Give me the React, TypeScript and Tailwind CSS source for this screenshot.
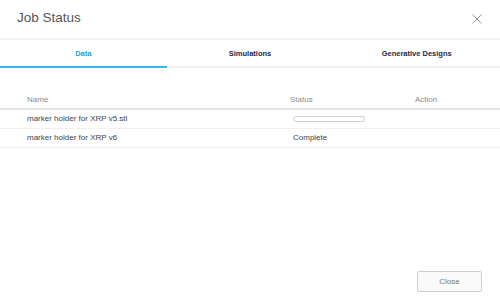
import { useState } from 'react';

export default function App() {
    const [activeTab, setActiveTab] = useState(0);

    const tabs = ["Data", "Simulations", "Generative Designs"];

    const rows = [
        { name: "marker holder for XRP v5.stl", status: null },
        { name: "marker holder for XRP v6", status: "Complete" }
    ];

    return (
        <div className="w-[500px] h-[300px] bg-white flex flex-col font-['Liberation_Sans',Arial,sans-serif] overflow-hidden">
            <div className="h-[38px] flex items-center justify-between pl-[17px] pr-[18px]">
                <h1 className="text-[13.5px] text-[#555] leading-none pb-[2px]">Job Status</h1>
                <button className="w-[10px] h-[10px] text-[#999]">
                    <svg viewBox="0 0 10 10" width="10" height="10" fill="none" stroke="currentColor" strokeWidth="1">
                        <path d="M0.5 0.5L9.5 9.5M9.5 0.5L0.5 9.5" />
                    </svg>
                </button>
            </div>

            <div className="h-[2px] bg-[#f2f2f2]" />

            <div className="flex h-[28px]">
                {tabs.map((tab, index) => (
                    <div
                        key={tab}
                        onClick={() => setActiveTab(index)}
                        className={`flex-1 flex items-center justify-center cursor-pointer border-b-2 text-[7.5px] font-bold pt-[1px] ${activeTab === index
                            ? "border-[#38b5ec] text-[#1e9fd8]"
                            : "border-[#f0f0f0] text-[#1d2947]"
                            }`}
                    >
                        {tab}
                    </div>
                ))}
            </div>

            <div className="mt-[23px]">
                <div className="flex items-center h-[19px] border-b-2 border-[#e6e6e6] text-[8px] text-[#8a8a8a]">
                    <div className="w-[290px] pl-[27px]">Name</div>
                    <div className="w-[125px]">Status</div>
                    <div className="flex-1">Action</div>
                </div>
                {rows.map((row) => (
                    <div key={row.name} className="flex items-center h-[19px] border-b border-[#f0f0f0] text-[8px] text-[#444]">
                        <div className="w-[290px] pl-[27px]">{row.name}</div>
                        <div className="w-[125px] pl-[3px]">
                            {row.status ?? (
                                <div className="w-[72px] h-[6px] rounded-full border border-[#cfcfcf] bg-white" />
                            )}
                        </div>
                        <div className="flex-1" />
                    </div>
                ))}
            </div>

            <div className="flex-1" />

            <div className="flex justify-end pr-[18px] pb-[8px]">
                <button className="w-[65px] h-[21px] border border-[#cfcfcf] rounded-[2px] bg-[#fafafa] text-[8px] text-[#777]">
                    Close
                </button>
            </div>
        </div>
    );
}
